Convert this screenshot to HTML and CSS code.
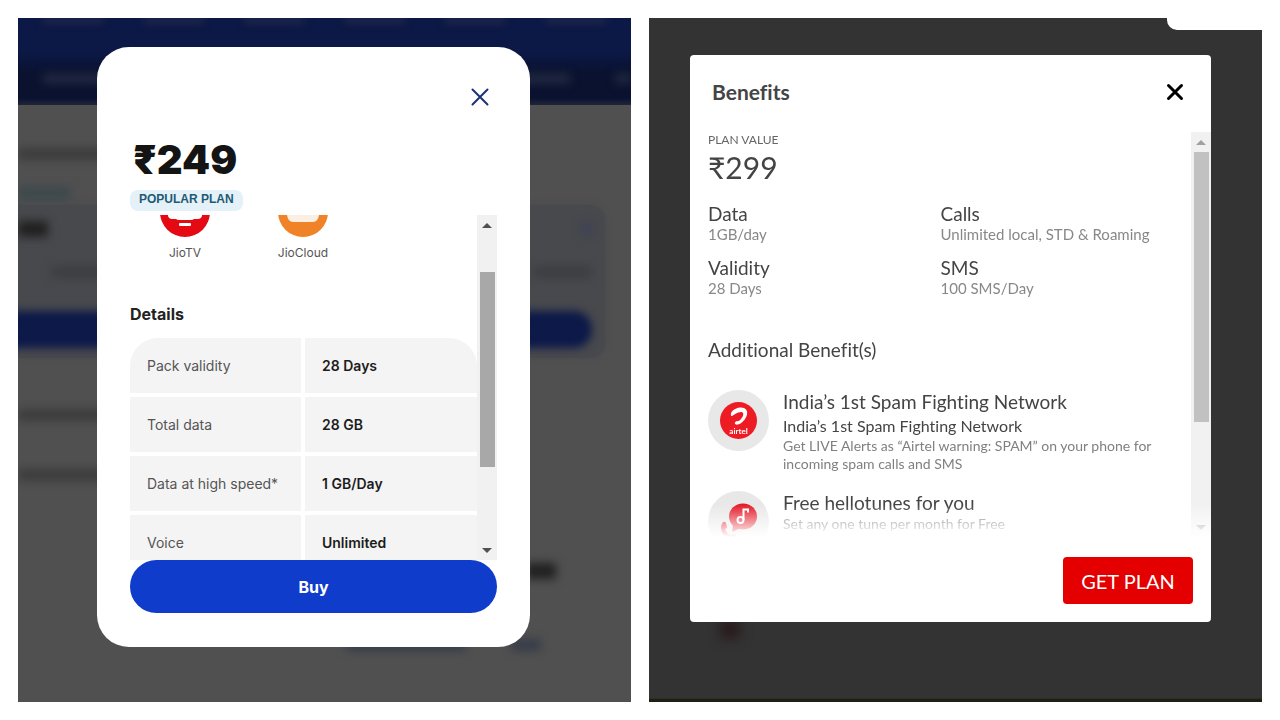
FILE: index.html
```html
<!DOCTYPE html>
<html lang="en">
<head>
    <meta charset="UTF-8">
    <meta name="viewport" content="width=device-width, initial-scale=1.0">
    <title>Plan details</title>
    <link rel="stylesheet" href="styles.css">
</head>
<body>
    <main class="compare">
        <section class="screen jio">
            <div class="page" aria-hidden="true">
                <div class="nav">
                    <div class="nav-top"><i></i><i></i><i></i><i></i><i></i><i></i></div>
                    <div class="nav-sub"><i></i><i></i><i></i></div>
                </div>
                <div class="line title"><i class="bar wide"></i></div>
                <div class="line tag"><i class="bar teal"></i></div>
                <div class="card">
                    <div class="line price-line"><i class="bar dark"></i><i class="bar dot"></i></div>
                    <div class="line facts"><i class="bar faint"></i><i class="bar faint"></i></div>
                    <div class="page-buy"></div>
                </div>
                <div class="line first"><i class="bar wide"></i></div>
                <div class="line"><i class="bar wide"></i></div>
                <div class="line amount"><i class="bar dark"></i></div>
                <div class="line links"><i class="bar blue long"></i><i class="bar blue"></i></div>
            </div>

            <div class="modal">
                <button class="close" type="button" aria-label="Close">
                    <svg width="20" height="20" viewBox="0 0 20 20"><path d="M2.500 2.500l15 15M17.500 2.500l-15 15"/></svg>
                </button>
                <h1 class="price">₹249</h1>
                <span class="badge">POPULAR PLAN</span>
                <div class="scroller">
                    <div class="content">
                        <div class="apps">
                            <div class="app">
                                <svg width="50" height="22" viewBox="0 28 50 22">
                                    <circle cx="25" cy="25" r="25" fill="#e50914"/>
                                    <path d="M8 20v9q1 3 4 3h4q1 1 3 1h12q2 0 3-1h4q3 0 4-3v-9z" fill="#fff"/>
                                    <rect x="19" y="36" width="12" height="3" rx="1" fill="#fff"/>
                                </svg>
                                <span>JioTV</span>
                            </div>
                            <div class="app">
                                <svg width="50" height="22" viewBox="0 28 50 22">
                                    <circle cx="25" cy="25" r="25" fill="#f08327"/>
                                    <path d="M9 20v8q1 7 6 7h20q5 0 6-7v-8z" fill="#fbeee2"/>
                                </svg>
                                <span>JioCloud</span>
                            </div>
                        </div>
                        <h2>Details</h2>
                        <table>
                            <tr><th scope="row">Pack validity</th><td>28 Days</td></tr>
                            <tr><th scope="row">Total data</th><td>28 GB</td></tr>
                            <tr><th scope="row">Data at high speed*</th><td>1 GB/Day</td></tr>
                            <tr><th scope="row">Voice</th><td>Unlimited</td></tr>
                        </table>
                    </div>
                    <div class="scrollbar">
                        <span class="arrow up"></span>
                        <span class="thumb"></span>
                        <span class="arrow down"></span>
                    </div>
                </div>
                <button class="buy" type="button">Buy</button>
            </div>
        </section>

        <section class="screen airtel">
            <div class="page" aria-hidden="true">
                <div class="corner"></div>
                <div class="smudge"></div>
                <div class="bottom-line"></div>
            </div>

            <div class="modal">
                <header>
                    <h1>Benefits</h1>
                    <button class="close" type="button" aria-label="Close">
                        <svg width="20" height="20" viewBox="0 0 20 20"><path d="M3.500 3.500l13 13M16.500 3.500l-13 13"/></svg>
                    </button>
                </header>
                <div class="scroller">
                    <div class="content">
                        <p class="label">PLAN VALUE</p>
                        <p class="price">₹299</p>
                        <dl>
                            <div><dt>Data</dt><dd>1GB/day</dd></div>
                            <div><dt>Calls</dt><dd>Unlimited local, STD &amp; Roaming</dd></div>
                            <div><dt>Validity</dt><dd>28 Days</dd></div>
                            <div><dt>SMS</dt><dd>100 SMS/Day</dd></div>
                        </dl>
                        <h2>Additional Benefit(s)</h2>
                        <article>
                            <svg class="icon" width="61" height="61" viewBox="0 0 61 61">
                                <circle cx="30.500" cy="30.500" r="30.500" fill="#e8e8e8"/>
                                <circle cx="30.500" cy="30.500" r="18.500" fill="#ed1c24"/>
                                <path d="M23 25.500c-1-4 4-7.500 9-8 5-.5 8 2.500 7 7-1 4.500-5 9-9 10-3 .7-4-1-2.500-2.700 1-1 2.500-.2 4-1.300 2.500-2 4.500-5.500 3.500-7.500-1-2-4.500-1-7 .5-2 1.300-4.500 3.500-5 2z" fill="#fff"/>
                                <text x="30.500" y="44" text-anchor="middle" fill="#fff">airtel</text>
                            </svg>
                            <div>
                                <h3>India’s 1st Spam Fighting Network</h3>
                                <h4>India’s 1st Spam Fighting Network</h4>
                                <p>Get LIVE Alerts as “Airtel warning: SPAM” on your phone for incoming spam calls and SMS</p>
                            </div>
                        </article>
                        <article>
                            <svg class="icon" width="61" height="61" viewBox="0 0 61 61">
                                <circle cx="30.500" cy="30.500" r="30.500" fill="#e8e8e8"/>
                                <ellipse cx="35" cy="25.500" rx="14" ry="13" fill="#e31b28"/>
                                <path d="M25 34l-1 7 9-4z" fill="#e31b28"/>
                                <path d="M15 31q2-1 3 1l1 4q0 2-2 2 1 4 6 6l3-1 4 3q0 2-3 2-7 1-12-5-4-7 0-12z" fill="#e31b28"/>
                                <circle cx="32.500" cy="29" r="3" fill="none" stroke="#fff" stroke-width="2"/>
                                <path d="M35.500 29V18.500h4.500v3" fill="none" stroke="#fff" stroke-width="2"/>
                            </svg>
                            <div>
                                <h3>Free hellotunes for you</h3>
                                <p>Set any one tune per month for Free</p>
                            </div>
                        </article>
                    </div>
                    <div class="scrollbar">
                        <span class="arrow up"></span>
                        <span class="thumb"></span>
                        <span class="arrow down"></span>
                    </div>
                </div>
                <footer><button class="get-plan" type="button">GET PLAN</button></footer>
            </div>
        </section>
    </main>
</body>
</html>
```
FILE: styles.css
```css
* {
    box-sizing: border-box;
}
body {
    margin: 0;
    background-color: #fff;
    font-family: Inter, sans-serif;
}
h1, h2, h3, h4, p, dl, dd {
    margin: 0;
}
button {
    border: none;
    padding: 0;
    cursor: pointer;
    font-family: inherit;
}
.compare {
    display: grid;
    grid-template-columns: 1fr 1fr;
    gap: 18px;
    padding: 18px;
    height: 100vh;
}
/* the page and the modal share one grid cell */
.screen {
    display: grid;
    grid-template: minmax(0, 1fr) / minmax(0, 1fr);
    overflow: hidden;
}
.page, .modal {
    grid-area: 1 / 1;
}
.page {
    overflow: hidden;
    min-height: 0;
}
.modal {
    background-color: #fff;
    display: flex;
    flex-direction: column;
    z-index: 1;
    min-height: 0;
}
.scroller {
    display: flex;
    flex: 1;
    min-height: 0;
    overflow: hidden;
}
.content {
    flex: 1;
    min-width: 0;
}
.scrollbar {
    width: 20px;
    background-color: #f1f1f1;
    display: flex;
    flex-direction: column;
    align-items: center;
    flex-shrink: 0;
}
.arrow {
    height: 20px;
    display: flex;
    align-items: center;
}
.arrow::before {
    content: "";
    border: 5px solid transparent;
}
.arrow.up::before {
    border-top: none;
    border-bottom-color: #505050;
}
.arrow.down {
    margin-top: auto;
}
.arrow.down::before {
    border-bottom: none;
    border-top-color: #505050;
}
.thumb {
    width: 15px;
}
.close {
    background: none;
    display: flex;
    align-items: center;
    justify-content: center;
}
.close path {
    fill: none;
    stroke-linecap: round;
}

/* left screen */
.jio {
    background-color: #505050;
}
.jio .modal {
    margin: 29px 101px 55px 79px;
    padding: 33px 33px 34px;
    border-radius: 32px;
    align-items: flex-start;
}
.jio .close {
    width: 34px;
    height: 34px;
    align-self: flex-end;
}
.jio .close path {
    stroke: #1b3272;
    stroke-width: 2;
}
.jio .price {
    font-size: 40px;
    line-height: 48px;
    font-weight: 900;
    color: #141414;
    margin: 22px 0 6px 3px;
}
.badge {
    font-size: 12px;
    line-height: 18px;
    height: 21px;
    flex-shrink: 0;
    font-family: "Liberation Sans", sans-serif;
    font-weight: 700;
    color: #1e5b73;
    background-color: #e4f1f8;
    border-radius: 8px;
    padding: 0 9px;
    margin-bottom: 4px;
}
.jio .scroller {
    width: 100%;
}
.apps {
    display: flex;
    gap: 8px;
}
.app {
    width: 110px;
    display: flex;
    flex-direction: column;
    align-items: center;
    font-size: 12px;
    line-height: 20px;
    color: #555;
    gap: 6px;
}
.jio h2 {
    margin: 41px 0 14px;
    font-size: 16px;
    line-height: 20px;
    font-weight: 700;
    color: #222;
}
table {
    width: 100%;
    border-spacing: 0;
    table-layout: fixed;
    border-radius: 28px 28px 0 0;
    overflow: hidden;
    font-size: 14px;
    line-height: 20px;
}
th, td {
    height: 59px;
    padding: 0 0 0 17px;
    text-align: left;
    background-color: #f4f4f4;
    border-bottom: 4px solid #fff;
}
th {
    width: 175px;
    font-weight: 400;
    color: #555;
    border-right: 4px solid #fff;
}
td {
    font-weight: 600;
    color: #1c1c1c;
}
.jio .thumb {
    height: 195px;
    margin-top: 37px;
    background-color: #a8a8a8;
}
.buy {
    width: 100%;
    height: 53px;
    flex-shrink: 0;
    border-radius: 27px;
    background-color: #0f3ccb;
    color: #fff;
    font-size: 16px;
    font-weight: 700;
}

/* dimmed page behind the left modal */
.nav {
    height: 87px;
    background: linear-gradient(#0c1845 35px, #0a1230 55px, #0a1230 80px, #20253b);
}
.nav-top, .nav-sub {
    display: flex;
    justify-content: space-between;
}
.nav-top {
    height: 50px;
    padding: 0 25px;
}
.nav-top i {
    width: 60px;
    height: 4px;
    background-color: #303650;
    filter: blur(4px);
}
.nav-sub {
    height: 37px;
    padding: 6px 0 0 25px;
}
.nav-sub i {
    width: 60px;
    height: 9px;
    background-color: #252b42;
    filter: blur(5px);
}
.nav-sub i:nth-child(2) {
    margin-left: auto;
    margin-right: 45px;
}
.nav-sub i:last-child {
    width: 16px;
}
.line {
    display: flex;
    align-items: center;
    height: 60px;
}
.line.title {
    height: 75px;
    padding-top: 23px;
}
.line.tag {
    height: 25px;
}
.bar {
    height: 12px;
    width: 30px;
    filter: blur(5px);
    background-color: #3c3c3c;
}
.bar.wide {
    width: 90px;
}
.bar.teal {
    width: 52px;
    background-color: #3c484c;
}
.bar.dark {
    height: 16px;
    background-color: #202020;
}
.bar.dot {
    width: 10px;
    background-color: #3d4058;
}
.bar.faint {
    width: 60px;
    background-color: #3d3e42;
}
.bar.blue {
    background-color: #363c48;
}
.bar.long {
    width: 120px;
}
.card {
    height: 153px;
    margin-right: 26px;
    background-color: #48494d;
    border-radius: 0 16px 16px 0;
    padding-right: 13px;
    box-shadow: 0 0 6px #48494d;
}
.price-line {
    height: 48px;
    justify-content: space-between;
}
.facts {
    height: 58px;
    padding-left: 33px;
    padding-bottom: 20px;
    justify-content: space-between;
}
.page-buy {
    height: 37px;
    margin-left: -12px;
    background-color: #0c1949;
    border-radius: 0 18px 18px 0;
    filter: blur(4px);
}
.line.first {
    margin-top: 27px;
}
.amount {
    margin-top: 36px;
    justify-content: flex-end;
    padding-right: 75px;
}
.links {
    margin-top: 14px;
    justify-content: flex-end;
    gap: 45px;
    padding-right: 90px;
}

/* right screen */
.airtel {
    background-color: #333;
    font-family: Lato, sans-serif;
    font-variant-ligatures: none;
    color: #444;
}
.airtel .page {
    display: flex;
    flex-direction: column;
}
.corner {
    width: 95px;
    height: 12px;
    align-self: flex-end;
    background-color: #fff;
    border-radius: 0 0 0 10px;
}
.smudge {
    width: 20px;
    height: 20px;
    margin: auto 0 59px 71px;
    background-color: #291b1d;
    filter: blur(6px);
}
.bottom-line {
    height: 4px;
    background-color: #1d2016;
    border-top: 1px solid #2c3020;
}
.airtel .modal {
    margin: 37px 51px 80px 41px;
    border-radius: 4px;
}
.airtel header {
    height: 77px;
    flex-shrink: 0;
    display: flex;
    align-items: center;
    justify-content: space-between;
    padding: 0 26px 4px 22px;
}
.airtel h1 {
    font-size: 21px;
    font-weight: 700;
}
.airtel .close path {
    stroke: #000;
    stroke-width: 3;
}
.airtel .content {
    padding: 0 18px;
}
.label {
    font-size: 12px;
    line-height: 15px;
    color: #666;
}
.airtel .price {
    font-size: 30px;
    line-height: 40px;
}
dl {
    display: grid;
    grid-template-columns: 1fr 1fr;
    gap: 13px 0;
    margin-top: 15px;
}
dt, .airtel h3 {
    font-size: 19px;
    line-height: 24px;
    font-weight: 400;
}
dd {
    font-size: 15px;
    line-height: 17px;
    color: #888;
}
.airtel h2 {
    font-size: 19px;
    line-height: 26px;
    font-weight: 400;
    margin: 40px 0 27px;
}
article {
    display: flex;
    gap: 14px;
    margin-bottom: 18px;
}
.icon {
    flex-shrink: 0;
}
.icon text {
    font-size: 8px;
    font-weight: 700;
}
.airtel h4 {
    font-size: 16px;
    line-height: 23px;
    font-weight: 400;
}
article p {
    font-size: 14px;
    line-height: 18px;
    color: #808080;
}
/* fades out the last rows above the footer */
.airtel .scroller {
    mask-image: linear-gradient(#000 92%, transparent);
}
.airtel .arrow::before {
    opacity: 0.5;
}
.airtel .thumb {
    height: 270px;
    background-color: #c1c1c1;
}
.airtel footer {
    display: flex;
    justify-content: flex-end;
    flex-shrink: 0;
    padding: 20px 18px 18px;
}
.get-plan {
    width: 130px;
    height: 47px;
    border-radius: 4px;
    background-color: #e40000;
    color: #fff;
    font-size: 20px;
}
```
